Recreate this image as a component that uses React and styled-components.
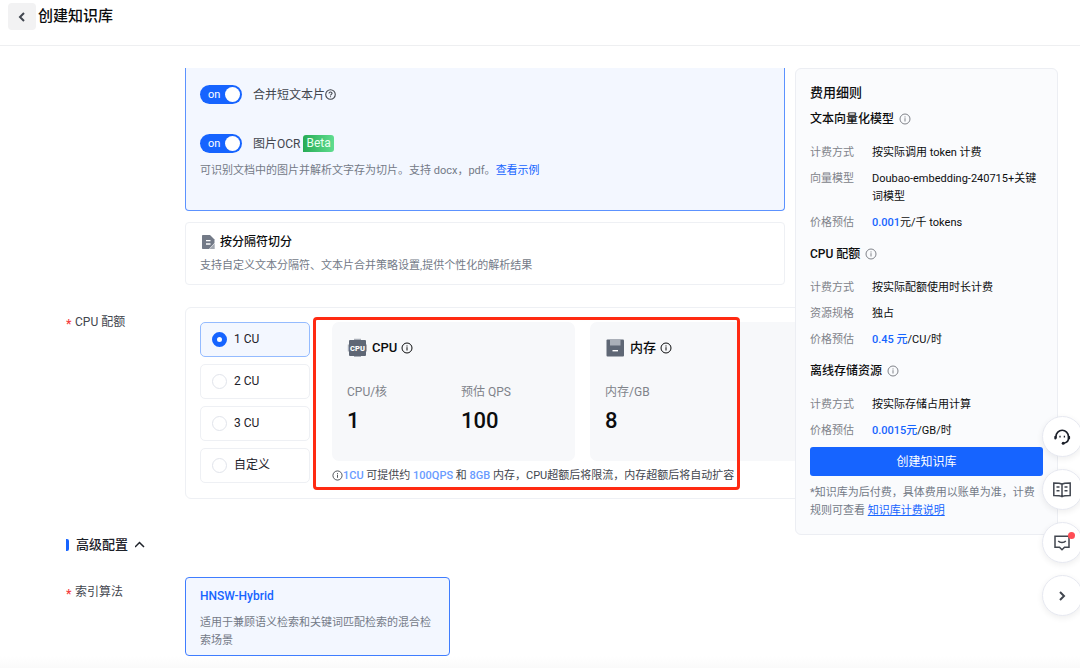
import React, { useState } from 'react';
import styled, { createGlobalStyle } from 'styled-components';

const GlobalStyle = createGlobalStyle`
  * {
    box-sizing: border-box;
  }

  body {
    margin: 0;
    background: #ffffff;
    color: #1d2129;
    font-family: Roboto, "Noto Sans CJK SC", sans-serif;
    font-size: 12px;
    line-height: 18px;
  }

  button, input {
    font-family: inherit;
  }
`;

// Page frame
const Page = styled.div`
  min-height: 100vh;
  background: linear-gradient(to top, #fafafa, #ffffff 12px);
`;

const Header = styled.header`
  display: flex;
  align-items: flex-start;
  gap: 2px;
  height: 46px;
  padding: 3px 8px;
  border-bottom: 1px solid #eeeff1;
`;

const BackButton = styled.button`
  display: flex;
  align-items: center;
  justify-content: center;
  width: 28px;
  height: 27px;
  padding: 0;
  border: none;
  border-radius: 4px;
  background: #f2f2f3;
  color: #41464f;
`;

const PageTitle = styled.h1`
  margin: 0;
  font-size: 15px;
  line-height: 26px;
  font-weight: 500;
  color: #0c0d0e;
`;

const Body = styled.div`
  display: flex;
  align-items: flex-start;
  padding: 22px 22px 0 66px;
`;

const Main = styled.main`
  flex: 1;
  min-width: 0;
  padding-bottom: 12px;
  overflow: hidden;
`;

// Form layout
const FormRow = styled.div`
  display: grid;
  grid-template-columns: 119px minmax(0, 1fr);
  margin-top: ${props => props.$gap || 0}px;
`;

const FormLabel = styled.div`
  padding-top: 6px;
  color: #42464e;

  &::before {
    content: '*';
    display: inline-block;
    width: 9px;
    color: #f53f3f;
    font-weight: 700;
    vertical-align: -2px;
    line-height: 12px;
  }
`;

const OptionStack = styled.div`
  display: flex;
  flex-direction: column;
  gap: 11px;
  padding-right: 10px;
`;

const OptionCard = styled.section`
  padding: 9px 14px;
  border: 1px solid #eef0f4;
  border-radius: 4px;
`;

const ActiveCard = styled(OptionCard)`
  padding: 17px 14px 30px;
  border-color: #5c92ff;
  border-top: none;
  border-radius: 0 0 4px 4px;
  background: #f3f7ff;
`;

const OptionTitle = styled.h3`
  display: flex;
  align-items: center;
  gap: 4px;
  margin: 0 0 5px;
  font-size: 12px;
  line-height: 20px;
  font-weight: 500;
  color: #0c0d0e;
`;

const Description = styled.p`
  margin: 0;
  font-size: 11px;
  color: #737a87;
`;

const TextLink = styled.a`
  display: inline-block;
  color: #1664ff;
  text-decoration: ${props => (props.$underline ? 'underline' : 'none')};
`;

// Switches
const SwitchLabel = styled.label`
  display: flex;
  align-items: center;
  height: 19px;
  margin-bottom: ${props => props.$gap}px;
  color: #42464e;
`;

const SwitchInput = styled.input`
  appearance: none;
  width: 0;
  height: 0;
  margin: 0;
`;

const SwitchTrack = styled.span`
  display: flex;
  align-items: center;
  justify-content: space-between;
  flex-direction: ${props => (props.$on ? 'row' : 'row-reverse')};
  width: 42px;
  height: 19px;
  margin-right: 11px;
  padding: 0 2px 0 8px;
  border-radius: 10px;
  background: ${props => (props.$on ? '#1664ff' : '#c9cdd4')};
  color: #ffffff;
  font-size: 11px;

  &::after {
    content: '';
    width: 15px;
    height: 15px;
    border-radius: 50%;
    background: #ffffff;
  }
`;

const BetaBadge = styled.span`
  margin-left: 3px;
  padding: 0 3px;
  border-radius: 3px 3px 3px 0;
  background: linear-gradient(90deg, #27ab55, #5fdd8f);
  color: #e9fff1;
  line-height: 17px;
`;

// CPU quota
const QuotaCard = styled.div`
  display: flex;
  gap: 22px;
  min-width: 800px;
  padding: 14px 14px 13px;
  border: 1px solid #eef0f4;
  border-radius: 6px;
`;

const RadioGroup = styled.div`
  display: flex;
  flex-direction: column;
  gap: 7px;
  flex: 0 0 110px;
`;

const RadioOption = styled.label`
  display: flex;
  align-items: center;
  gap: 7px;
  height: 35px;
  padding: 0 11px 1px;
  border: 1px solid ${props => (props.$checked ? '#94bbff' : '#eef0f4')};
  border-radius: 5px;
  background: ${props => (props.$checked ? '#f3f7ff' : '#ffffff')};
`;

const RadioInput = styled.input`
  appearance: none;
  width: 15px;
  height: 15px;
  margin: 0;
  border: 1px solid #e1e4eb;
  border-radius: 50%;
  background: #ffffff;

  &:checked {
    border: 5px solid #1664ff;
  }
`;

const QuotaDetail = styled.div`
  position: relative;
  flex: 1;
`;

const Highlight = styled.div`
  position: absolute;
  top: -5px;
  left: -19px;
  width: 427px;
  height: 173px;
  border: 3px solid #ff2a12;
  border-radius: 4px;
  pointer-events: none;
`;

const PanelRow = styled.div`
  display: grid;
  grid-template-columns: 243px 1fr;
  gap: 15px;
`;

const Panel = styled.section`
  height: 139px;
  padding: 16px 0 0 15px;
  border-radius: 7px;
  background: #f7f8fa;
`;

const PanelTitle = styled.h3`
  display: flex;
  align-items: center;
  gap: 4px;
  margin: 0 0 25px;
  font-size: 13px;
  line-height: 20px;
  font-weight: 500;
  color: #0c0d0e;
`;

const Metrics = styled.dl`
  display: grid;
  grid-template-columns: repeat(2, 114px);
  margin: 0;

  dt {
    color: #80838a;
  }

  dd {
    margin: 7px 0 0;
    font-size: 22px;
    line-height: 26px;
    font-weight: 500;
    color: #0c0d0e;
  }
`;

const Hint = styled.p`
  margin: 6px 0 0;
  font-size: 11px;
  color: #42464e;
  white-space: nowrap;

  svg {
    vertical-align: -2px;
  }

  b {
    font-weight: 500;
    color: #689bff;
  }
`;

// Advanced settings
const SectionToggle = styled.button`
  display: flex;
  align-items: center;
  gap: 7px;
  margin-top: 36px;
  padding: 0;
  border: none;
  background: none;
  color: #1d2129;
  font-size: 13px;
  line-height: 20px;
  font-weight: 500;

  &::before {
    content: '';
    width: 3px;
    height: 12px;
    border-radius: 0 2px 2px 0;
    background: #1664ff;
  }
`;

const AlgorithmCard = styled.section`
  width: 265px;
  padding: 9px 14px 5px;
  border: 1px solid #3f7dff;
  border-radius: 4px;
  background: #f3f7ff;
`;

const AlgorithmTitle = styled.h3`
  margin: 0 0 9px;
  font-size: 12px;
  font-weight: 500;
  color: #1664ff;
`;

// Price panel
const Aside = styled.aside`
  flex: 0 0 263px;
  padding: 13px 14px 14px;
  border: 1px solid #eceef3;
  border-radius: 6px;
  background: #fafbfd;
`;

const AsideTitle = styled.h2`
  margin: 0 0 7px;
  font-size: 13px;
  line-height: 21px;
  font-weight: 500;
  color: #0c0d0e;
`;

const PriceSection = styled.section`
  & + & {
    margin-top: 13px;
  }
`;

const PriceHeading = styled.h3`
  display: flex;
  align-items: center;
  gap: 5px;
  margin: 0 0 16px;
  font-size: 12px;
  font-weight: 500;
  color: #0c0d0e;

  svg {
    color: #80838a;
  }
`;

const PriceList = styled.dl`
  display: grid;
  grid-template-columns: 62px 1fr;
  row-gap: 8px;
  margin: 0;
  font-size: 11px;

  dt {
    color: #80838a;
  }

  dd {
    margin: 0;
    color: #0c0d0e;
  }

  b {
    font-weight: 500;
    color: #1664ff;
  }
`;

const SubmitButton = styled.button`
  width: 100%;
  height: 29px;
  margin: 7px 0 8px;
  padding: 0 0 2px;
  border: none;
  border-radius: 3px;
  background: #1664ff;
  color: #ffffff;
  font-size: 12px;
`;

// Floating tools
const FloatBar = styled.nav`
  position: fixed;
  right: -3px;
  bottom: 52px;
  display: flex;
  flex-direction: column;
  gap: 12px;
`;

const FloatButton = styled.button`
  position: relative;
  display: flex;
  align-items: center;
  justify-content: center;
  width: 41px;
  height: 41px;
  padding: 0 1px 0 0;
  border: 1px solid #e6e8f0;
  border-radius: 50%;
  background: #ffffff;
  box-shadow: 0 2px 6px rgba(0, 0, 0, 0.07);
  color: #41464f;
`;

const UnreadDot = styled.span`
  position: absolute;
  top: 9px;
  right: 7px;
  width: 7px;
  height: 7px;
  border-radius: 50%;
  background: #ff4d55;
`;

const InfoIcon = ({ size = 12 }) => (
  <svg width={size} height={size} viewBox="0 0 12 12" fill="none" stroke="currentColor">
    <circle cx="6" cy="6" r="5" />
    <path d="M6 5.2v3.3M6 3.4v1.1" />
  </svg>
);

const HelpIcon = () => (
  <svg width="11" height="11" viewBox="0 0 12 12" fill="none" stroke="currentColor" strokeWidth="1.2">
    <circle cx="6" cy="6" r="5.2" />
    <path d="M4.4 4.9c0-2.3 3.3-2.1 3.3-.2C7.7 5.8 6 5.9 6 7.2M6 8v1.1" />
  </svg>
);

const ChevronIcon = ({ points, width = 2 }) => (
  <svg width="12" height="12" viewBox="0 0 12 12" fill="none" stroke="currentColor" strokeWidth={width}>
    <polyline points={points} />
  </svg>
);

const DocIcon = () => (
  <svg width="16" height="16" viewBox="0 0 16 16">
    <path fill="#737a87" d="M2.700 1H10l4.500 4.500V9L9 15H2.700a.7.7 0 0 1-.7-.7V1.700a.7.7 0 0 1 .7-.7z" />
    <path fill="none" stroke="#fff" strokeWidth="1.300" d="M6 6.700h4.500M6 10h4.500" />
    <path fill="#a3a8b1" d="M14.700 9.500V15H9.500z" />
  </svg>
);

const CpuIcon = () => (
  <svg width="21" height="20" viewBox="0 0 21 20">
    <path fill="#aaafb8" d="M7 .8h7v2H7zM7 17h7v2H7zM.8 6.500h2v7h-2zM18 6.500h2v7h-2z" />
    <rect x="2" y="2" width="17" height="16" rx="1" fill="#5f6775" />
    <text x="10.500" y="12.800" textAnchor="middle" fontSize="7.500" fontWeight="900" fill="#fff">CPU</text>
  </svg>
);

const MemoryIcon = () => (
  <svg width="21" height="20" viewBox="0 0 21 20">
    <rect x="1.500" y="1.500" width="17.500" height="17" rx="1" fill="#5f6775" />
    <path fill="#aaafb8" d="M5 1.500h10.500v6H5z" />
    <path fill="#fff" d="M7.500 12h5.500v1.400H7.500z" />
  </svg>
);

const HeadsetIcon = () => (
  <svg width="18" height="18" viewBox="0 0 18 18" fill="none" stroke="#1b1f29" strokeWidth="1.600">
    <path d="M3 10.500V8.500a6.200 6.200 0 0 1 12.400 0v2c0 2.600-2 4.200-4.900 4.700" />
    <path d="M2.300 8.800v1.700M16.100 8.800v1.700" strokeWidth="2" strokeLinecap="round" />
    <path d="M7 7.700v1.800M11.400 7.700v1.800" strokeWidth="1.300" />
    <circle cx="10.200" cy="15.200" r="1.500" fill="#1b1f29" stroke="none" />
  </svg>
);

const BookIcon = () => (
  <svg width="20" height="18" viewBox="0 0 20 18" fill="none" stroke="currentColor" strokeWidth="1.500">
    <path d="M10 3.200C8.500 2 6 1.900 1.800 1.900v12.600c4.200 0 6.500.1 8.200 1.200 1.700-1.100 4-1.200 8.200-1.200V1.900C14 1.900 11.500 2 10 3.200zM10 3.200v12.500" />
    <path d="M4.500 6h3M4.500 9.800h3M12.500 6h3M12.500 9.800h3" />
  </svg>
);

const MessageIcon = () => (
  <svg width="18" height="18" viewBox="0 0 18 18" fill="none" stroke="currentColor" strokeWidth="1.500">
    <path d="M2 2.200h14v11h-4.500L9 15.700l-2.500-2.500H2z" />
    <path d="M5.200 7C7 9 11 9 12.800 7" />
  </svg>
);

const quotaOptions = ['1 CU', '2 CU', '3 CU', '自定义'];

const priceSections = [
  {
    title: '文本向量化模型',
    rows: [
      ['计费方式', '按实际调用 token 计费'],
      ['向量模型', 'Doubao-embedding-240715+关键词模型'],
      ['价格预估', <><b>0.001</b>元/千 tokens</>],
    ],
  },
  {
    title: 'CPU 配额',
    rows: [
      ['计费方式', '按实际配额使用时长计费'],
      ['资源规格', '独占'],
      ['价格预估', <><b>0.45 元</b>/CU/时</>],
    ],
  },
  {
    title: '离线存储资源',
    rows: [
      ['计费方式', '按实际存储占用计算'],
      ['价格预估', <><b>0.0015元</b>/GB/时</>],
    ],
  },
];

function Switch({ gap, children }) {
  const [on, setOn] = useState(true);
  return (
    <SwitchLabel $gap={gap}>
      <SwitchInput type="checkbox" role="switch" checked={on} onChange={() => setOn(!on)} />
      <SwitchTrack $on={on}>{on ? 'on' : 'off'}</SwitchTrack>
      {children}
    </SwitchLabel>
  );
}

function QuotaPicker() {
  const [quota, setQuota] = useState('1 CU');
  return (
    <QuotaCard>
      <RadioGroup>
        {quotaOptions.map(option => (
          <RadioOption key={option} $checked={option === quota}>
            <RadioInput
              type="radio"
              name="quota"
              checked={option === quota}
              onChange={() => setQuota(option)}
            />
            {option}
          </RadioOption>
        ))}
      </RadioGroup>
      <QuotaDetail>
        <PanelRow>
          <Panel>
            <PanelTitle><CpuIcon />CPU<InfoIcon /></PanelTitle>
            <Metrics>
              <div><dt>CPU/核</dt><dd>1</dd></div>
              <div><dt>预估 QPS</dt><dd>100</dd></div>
            </Metrics>
          </Panel>
          <Panel>
            <PanelTitle><MemoryIcon />内存<InfoIcon /></PanelTitle>
            <Metrics>
              <div><dt>内存/GB</dt><dd>8</dd></div>
            </Metrics>
          </Panel>
        </PanelRow>
        <Hint>
          <InfoIcon size={11} /><b>1CU</b> 可提供约 <b>100QPS</b> 和 <b>8GB</b> 内存，CPU超额后将限流，内存超额后将自动扩容
        </Hint>
        <Highlight />
      </QuotaDetail>
    </QuotaCard>
  );
}

function PricePanel() {
  return (
    <Aside>
      <AsideTitle>费用细则</AsideTitle>
      {priceSections.map(section => (
        <PriceSection key={section.title}>
          <PriceHeading>{section.title}<InfoIcon /></PriceHeading>
          <PriceList>
            {section.rows.map(([name, value]) => (
              <React.Fragment key={name}>
                <dt>{name}</dt>
                <dd>{value}</dd>
              </React.Fragment>
            ))}
          </PriceList>
        </PriceSection>
      ))}
      <SubmitButton type="button">创建知识库</SubmitButton>
      <Description>
        *知识库为后付费，具体费用以账单为准，计费规则可查看 <TextLink href="#billing" $underline>知识库计费说明</TextLink>
      </Description>
    </Aside>
  );
}

function App() {
  return (
    <Page>
      <GlobalStyle />
      <Header>
        <BackButton type="button" aria-label="返回">
          <ChevronIcon points="8,2 4,6 8,10" />
        </BackButton>
        <PageTitle>创建知识库</PageTitle>
      </Header>

      <Body>
        <Main>
          <FormRow>
            <div />
            <OptionStack>
              <ActiveCard>
                <Switch gap={30}>合并短文本片<HelpIcon /></Switch>
                <Switch gap={9}>图片OCR<BetaBadge>Beta</BetaBadge></Switch>
                <Description>
                  可识别文档中的图片并解析文字存为切片。支持 docx，pdf。<TextLink href="#example">查看示例</TextLink>
                </Description>
              </ActiveCard>
              <OptionCard>
                <OptionTitle><DocIcon />按分隔符切分</OptionTitle>
                <Description>支持自定义文本分隔符、文本片合并策略设置,提供个性化的解析结果</Description>
              </OptionCard>
            </OptionStack>
          </FormRow>

          <FormRow $gap={22}>
            <FormLabel>CPU 配额</FormLabel>
            <QuotaPicker />
          </FormRow>

          <SectionToggle type="button">
            高级配置
            <ChevronIcon points="0,8 4.5,3.5 9,8" width={1.5} />
          </SectionToggle>

          <FormRow $gap={22}>
            <FormLabel>索引算法</FormLabel>
            <AlgorithmCard>
              <AlgorithmTitle>HNSW-Hybrid</AlgorithmTitle>
              <Description>适用于兼顾语义检索和关键词匹配检索的混合检索场景</Description>
            </AlgorithmCard>
          </FormRow>
        </Main>

        <PricePanel />
      </Body>

      <FloatBar>
        <FloatButton type="button" aria-label="客服"><HeadsetIcon /></FloatButton>
        <FloatButton type="button" aria-label="文档"><BookIcon /></FloatButton>
        <FloatButton type="button" aria-label="消息"><MessageIcon /><UnreadDot /></FloatButton>
        <FloatButton type="button" aria-label="收起">
          <ChevronIcon points="4,2 8,6 4,10" />
        </FloatButton>
      </FloatBar>
    </Page>
  );
}

export default App;
